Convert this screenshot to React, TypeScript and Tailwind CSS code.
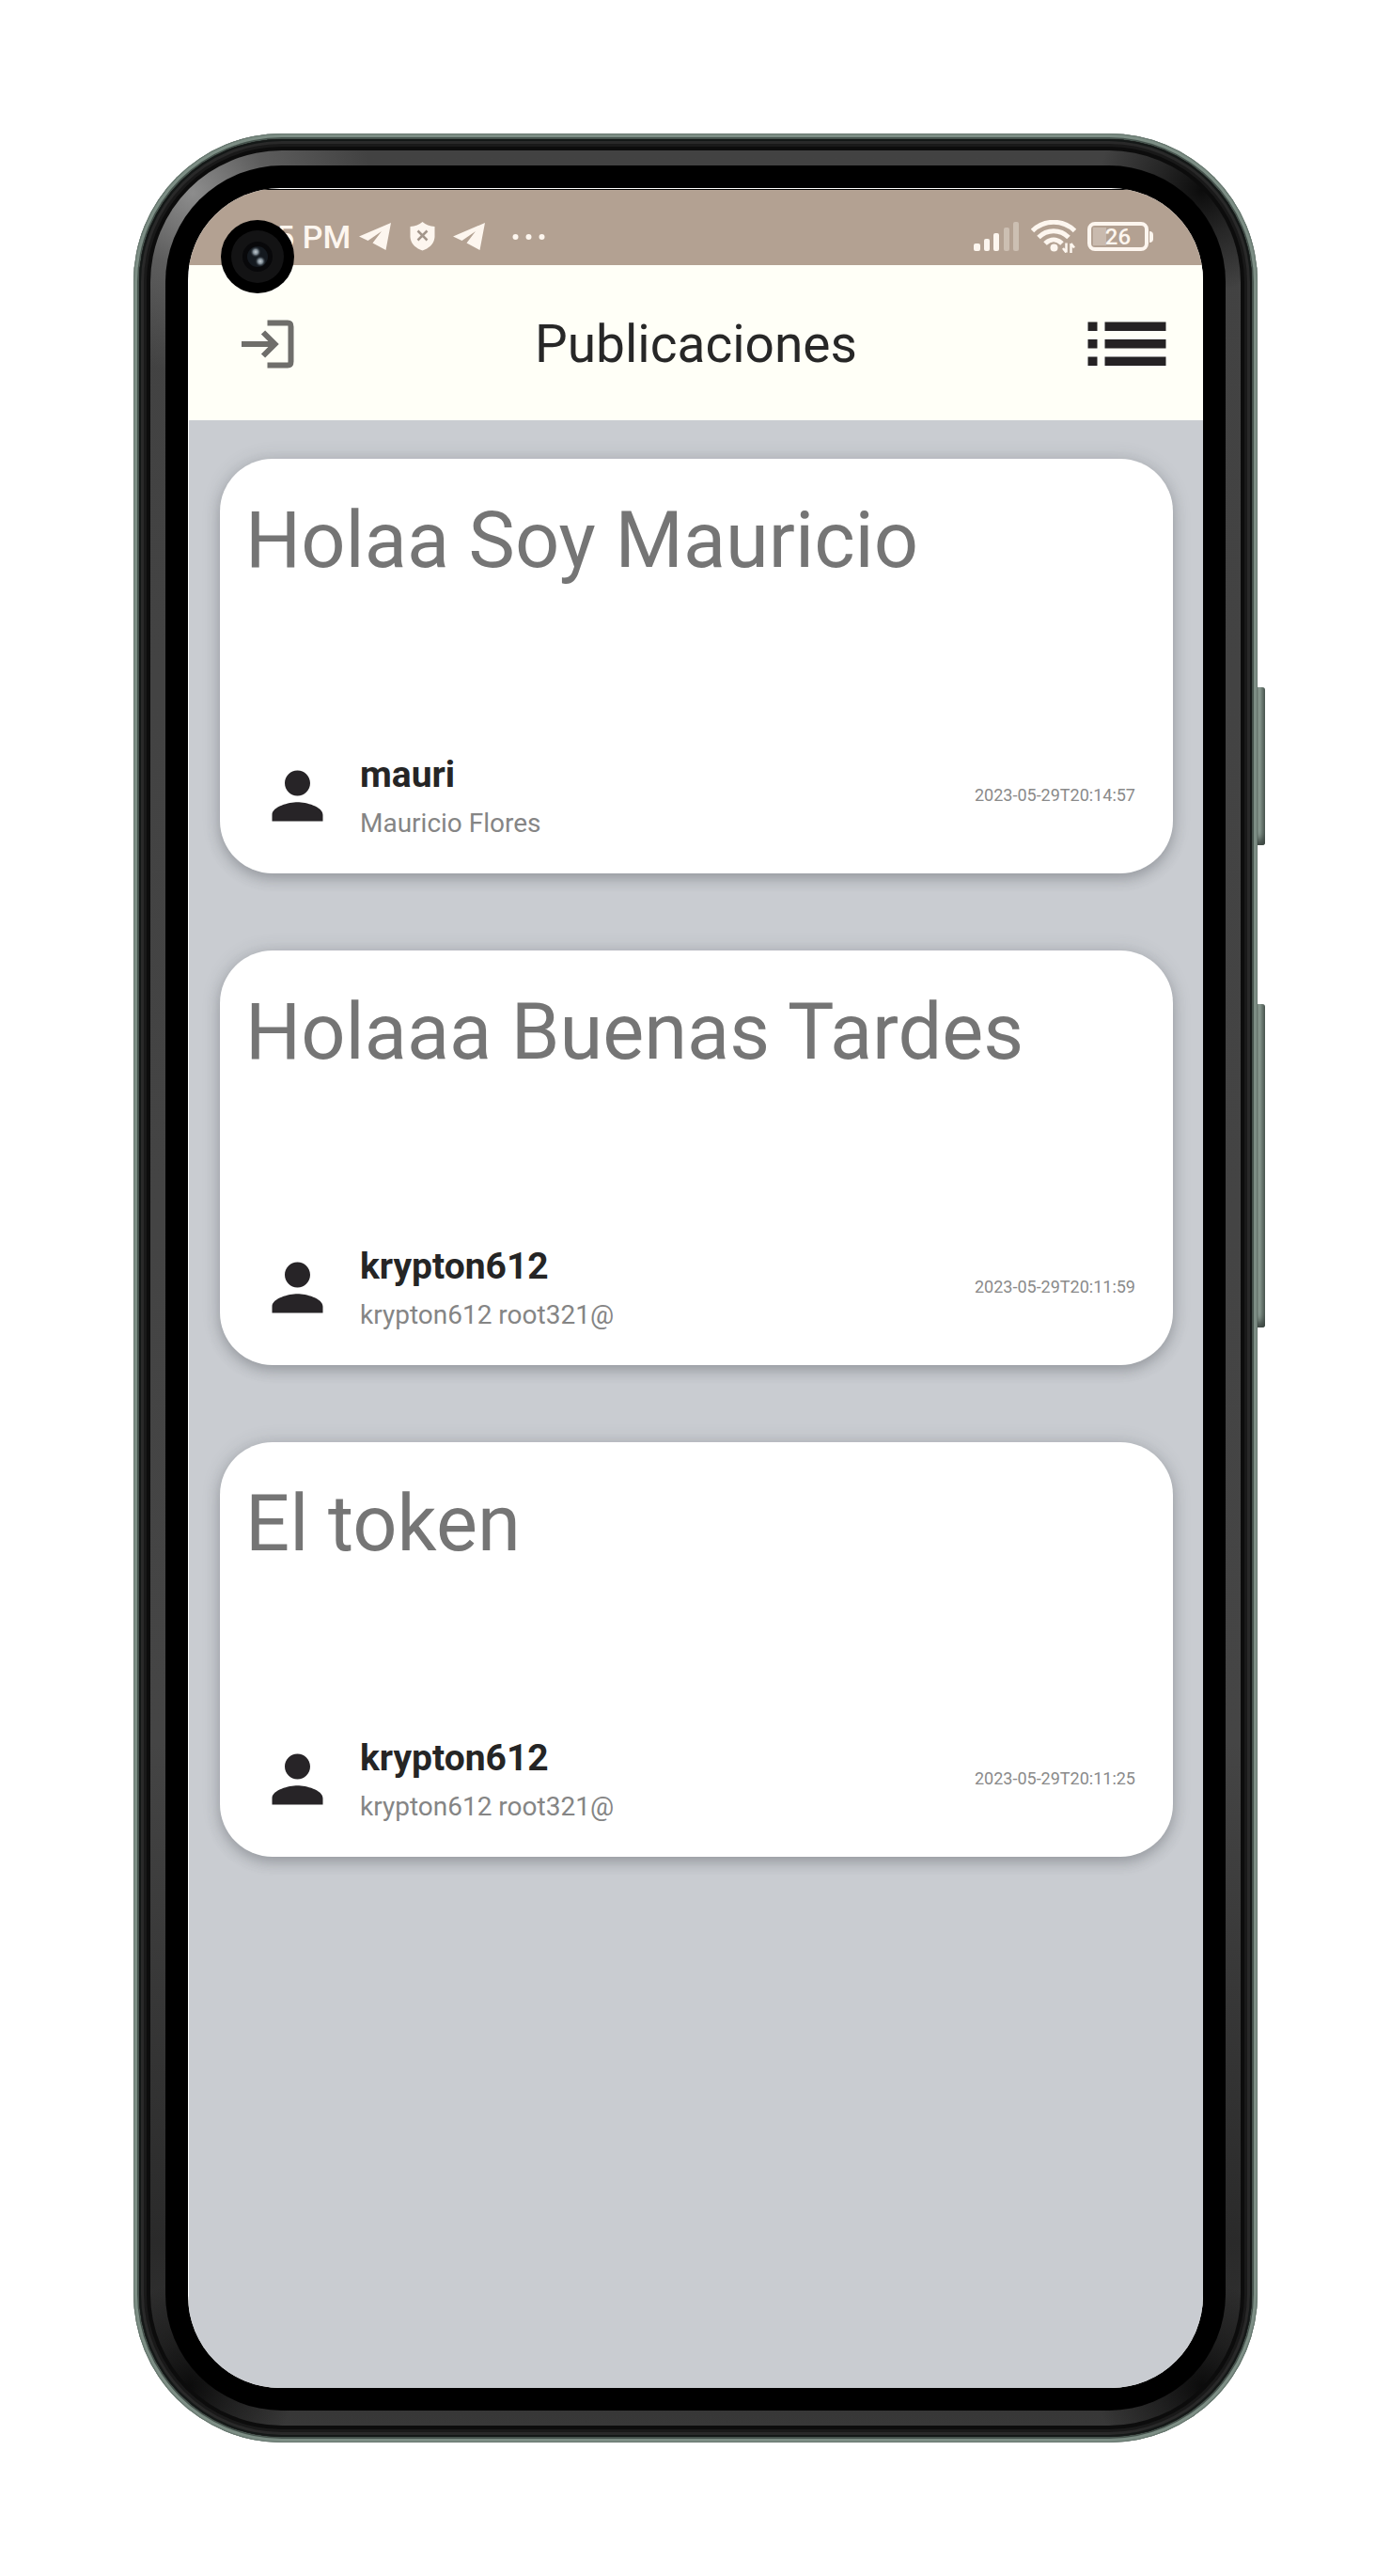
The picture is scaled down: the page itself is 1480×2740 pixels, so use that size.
import type { ReactNode } from "react";

type Post = { title: string; user: string; fullName: string; date: string };

const posts: Post[] = [
  { title: "Holaa Soy Mauricio", user: "mauri", fullName: "Mauricio Flores", date: "2023-05-29T20:14:57" },
  { title: "Holaaa Buenas Tardes", user: "krypton612", fullName: "krypton612 root321@", date: "2023-05-29T20:11:59" },
  { title: "El token", user: "krypton612", fullName: "krypton612 root321@", date: "2023-05-29T20:11:25" },
];

function PlaneIcon() {
  return (
    <svg width="35" height="31" viewBox="0 0 35 31" aria-hidden="true">
      <path d="M34 1 28.500 30 14.500 22.500 24 10 9.500 20 0 15.500Z" fill="#fdf6ef" />
    </svg>
  );
}

function ShieldIcon() {
  return (
    <svg width="27" height="31" viewBox="0 0 27 31" aria-hidden="true">
      <path d="M13.500 0C17 3 21 4.500 26.500 5V16C26 23 21 28 13.500 30.500 6 28 1 23 .5 16V5C6 4.500 10 3 13.500 0Z" fill="#fdf6ef" />
      <path d="m8.500 9.500 10 10m0-10-10 10" stroke="#a3968b" strokeWidth="2.500" />
    </svg>
  );
}

function DotsIcon() {
  return (
    <svg width="35" height="8" viewBox="0 0 35 8" fill="#fdf6ef" aria-hidden="true">
      <circle cx="3.500" cy="4" r="3" />
      <circle cx="17.500" cy="4" r="3" />
      <circle cx="31.500" cy="4" r="3" />
    </svg>
  );
}

function SignalIcon() {
  return (
    <svg width="49" height="31" viewBox="0 0 49 31" fill="#fdf6ef" aria-hidden="true">
      <rect x="0" y="23" width="7" height="8" rx="2" />
      <rect x="11" y="18" width="6" height="13" rx="2" />
      <rect x="21" y="12" width="6" height="19" rx="2" />
      <rect x="32" y="6" width="6" height="25" rx="2" opacity=".35" />
      <rect x="42" y="0" width="6" height="31" rx="2" opacity=".35" />
    </svg>
  );
}

function WifiIcon() {
  return (
    <svg width="48" height="35" viewBox="0 0 48 35" fill="none" stroke="#fdf6ef" aria-hidden="true">
      <path d="M1.500 11.500C14-.8 34-.8 46.500 11.500" strokeWidth="5" />
      <path d="M8 18.500c9-9 23-9 32 0" strokeWidth="5" />
      <path d="M15 25c5.500-5.500 12.500-5.500 18 0" strokeWidth="5" />
      <circle cx="24.500" cy="29.500" r="4" fill="#fdf6ef" stroke="none" />
      <path d="M37.500 24.500v10m0 0-3.500-4.500M42.500 35v-10m0 0 3.500 4.500" strokeWidth="2.500" />
    </svg>
  );
}

function Battery() {
  return (
    <div className="flex items-center gap-px">
      <div className="relative flex h-[31px] w-[65px] items-center justify-center rounded-[8px] border-4 border-[#fdf6ef]">
        <span className="absolute inset-y-0.5 left-0.5 w-3.5 bg-[#fdf6ef]/30" />
        <span className="relative text-[24px] leading-6 font-medium text-[#fdf6ef]">26</span>
      </div>
      <span className="h-3 w-1 rounded-r-full bg-[#fdf6ef]" />
    </div>
  );
}

function LoginIcon() {
  return (
    <svg width="56" height="52" viewBox="0 0 56 52" fill="none" stroke="#6f6e6b" aria-hidden="true">
      <path d="M0 26h36" strokeWidth="6" />
      <path d="m23 13.500 12.500 12.500L23 38.500" strokeWidth="6" />
      <path d="M27.500 3.500H49Q52.500 3.500 52.500 7.500V44.500Q52.500 48.500 49 48.500H27.500" strokeWidth="6" />
    </svg>
  );
}

function ListIcon() {
  return (
    <svg width="84" height="48" viewBox="0 0 84 48" fill="#252224" aria-hidden="true">
      <path d="M.5 .5h10V10H.5zM.5 19h10v9.500H.5zM.5 37.500h10V47H.5zM18.500 .5h65V10h-65zM18.500 19h65v9.500h-65zM18.500 37.500h65V47h-65z" />
    </svg>
  );
}

function PersonIcon() {
  return (
    <svg className="size-[81px] shrink-0" viewBox="0 0 24 24" fill="#272427" aria-hidden="true">
      <path d="M12 12c2.210 0 4-1.790 4-4s-1.790-4-4-4-4 1.790-4 4 1.790 4 4 4zm0 2c-2.670 0-8 1.340-8 4v2h16v-2c0-2.660-5.330-4-8-4z" />
    </svg>
  );
}

function StatusBar() {
  return (
    <div className="flex h-[81px] items-start justify-between border-t border-black bg-[#b3a192] pt-[34px] pr-[53px] pl-[93px]">
      <div className="flex h-[31px] items-center">
        <span className="w-[88px] text-[34px] leading-8 font-medium whitespace-nowrap text-[#fdf6ef]">5 PM</span>
        <PlaneIcon />
        <span className="w-[19px]" />
        <ShieldIcon />
        <span className="w-[19px]" />
        <PlaneIcon />
        <span className="w-7" />
        <DotsIcon />
      </div>
      <div className="flex h-[31px] items-center gap-3">
        <SignalIcon />
        <WifiIcon />
        <Battery />
      </div>
    </div>
  );
}

function Camera() {
  return (
    <div className="absolute top-[34px] left-[35px] flex size-[78px] items-center justify-center rounded-full bg-black">
      <div className="flex size-14 items-center justify-center rounded-full bg-[#131314]">
        <svg width="32" height="32" viewBox="0 0 32 32" aria-hidden="true">
          <defs>
            <radialGradient id="glint">
              <stop offset="0" stopColor="#c3cbd1" />
              <stop offset=".45" stopColor="#7b8790" />
              <stop offset="1" stopColor="#11161c" stopOpacity="0" />
            </radialGradient>
          </defs>
          <circle cx="16" cy="16" r="16" fill="#08080a" />
          <circle cx="16" cy="16" r="11" fill="#14191f" />
          <circle cx="14" cy="11" r="6" fill="url(#glint)" />
          <circle cx="19" cy="21" r="6" fill="url(#glint)" />
        </svg>
      </div>
    </div>
  );
}

function Header() {
  return (
    <header className="grid h-[165px] grid-cols-[1fr_auto_1fr] items-center bg-[#fffff7] px-[39px] pt-0.5 text-[#272727]">
      <button type="button" aria-label="Salir" className="justify-self-start pl-[17px]">
        <LoginIcon />
      </button>
      <h1 className="text-[55px] leading-[64px]">Publicaciones</h1>
      <button type="button" aria-label="Menú" className="justify-self-end">
        <ListIcon />
      </button>
    </header>
  );
}

function PostCard({ post }: { post: Post }) {
  return (
    <article className="flex h-[441px] flex-col justify-between rounded-[56px] bg-white pt-[39px] pr-10 pb-7 pl-[27px] shadow-[0_6px_14px_rgba(70,72,78,0.3),0_0_20px_rgba(70,72,78,0.16)]">
      <h2 className="text-[83px] leading-[96px] text-[#757575]">{post.title}</h2>
      <div className="flex items-center pl-[15px]">
        <PersonIcon />
        <div className="flex-1 pt-2 pl-[26px]">
          <p className="text-[39px] leading-[51px] font-bold text-[#252525]">{post.user}</p>
          <p className="text-[28px] leading-[51px] text-[#858585]">{post.fullName}</p>
        </div>
        <time dateTime={post.date} className="text-[18px] leading-6 text-[#8a8a8a]">
          {post.date}
        </time>
      </div>
    </article>
  );
}

function PhoneFrame({ children }: { children: ReactNode }) {
  return (
    <div className="relative">
      <span className="absolute top-[589px] -right-2 h-[168px] w-3 rounded-r-[3px] bg-linear-to-r from-[#46534d] via-[#8b9c93] to-[#4b5751] shadow-[inset_0_-10px_8px_-4px_#3c4641]" />
      <span className="absolute top-[926px] -right-2 h-[344px] w-3 rounded-r-[3px] bg-linear-to-r from-[#46534d] via-[#8b9c93] to-[#4b5751] shadow-[inset_0_-10px_8px_-4px_#3c4641]" />
      <div className="relative rounded-[158px] bg-[#46534d] p-1.5 shadow-[inset_0_0_0_1px_#66766e,inset_0_0_0_4px_#7d8e85]">
        <div className="rounded-[152px] bg-[#0c0c0c] p-3 shadow-[inset_0_0_0_2px_#141817,inset_0_0_0_5px_#292929,inset_0_0_0_8px_#191919]">
          <div className="rounded-[140px] bg-[radial-gradient(circle_at_45px_45px,#8d8d8d_0,#77777780_80px,transparent_190px),radial-gradient(circle_at_calc(100%-42px)_42px,#0c0c0c_0,#0c0c0c80_50px,transparent_110px),radial-gradient(circle_at_42px_calc(100%-42px),#0c0c0c_0,#0c0c0c80_50px,transparent_110px),radial-gradient(circle_at_calc(100%-42px)_calc(100%-42px),#0c0c0c_0,#0c0c0c80_50px,transparent_110px),linear-gradient(to_bottom,#424242_0,#454545_70%,#2a2a2a_92%,#383838_100%)] p-4">
            <div className="rounded-[124px] bg-black p-6">
              <div className="relative flex aspect-[1080/2340] w-full flex-col overflow-hidden rounded-[98px] bg-white pt-px pl-px">
                {children}
              </div>
            </div>
          </div>
        </div>
      </div>
    </div>
  );
}

export default function App() {
  return (
    <div className="bg-white p-[142px] font-[Roboto,sans-serif]">
      <PhoneFrame>
        <StatusBar />
        <Header />
        <main className="flex flex-1 flex-col gap-[82px] bg-[#c9ccd1] pt-[41px] pr-8 pl-[33px]">
          {posts.map((post) => (
            <PostCard key={post.date} post={post} />
          ))}
        </main>
        <Camera />
      </PhoneFrame>
    </div>
  );
}
